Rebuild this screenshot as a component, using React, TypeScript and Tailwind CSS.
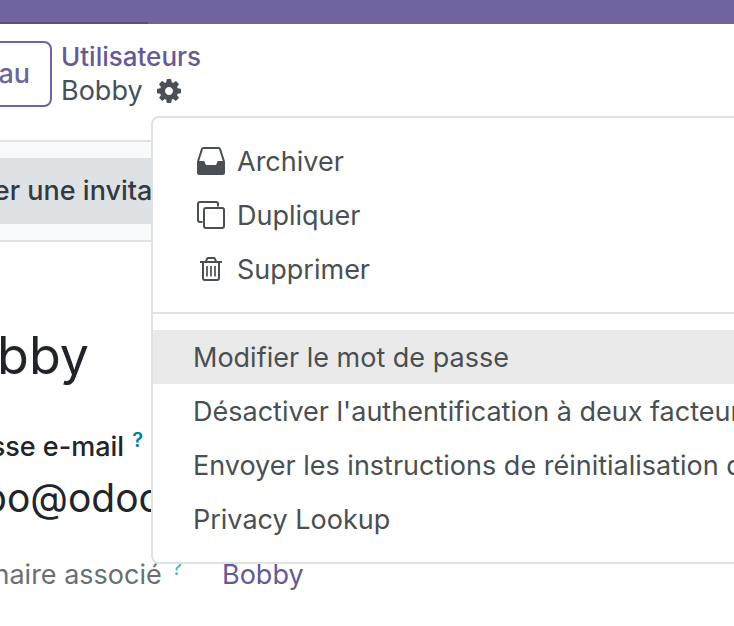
import type { ReactNode } from 'react';

interface MenuItemProps {
  active?: boolean;
  icon?: ReactNode;
  label: string;
}

function GearIcon() {
  return (
    <svg className="size-6" viewBox="0 128 1536 1536" fill="currentColor" aria-hidden="true">
      <path d="M1024 896q0-106-75-181t-181-75-181 75-75 181 75 181 181 75 181-75 75-181zm512-109v222q0 12-8 23t-20 13l-185 28q-19 54-39 91 35 50 107 138 10 12 10 25t-9 23q-27 37-99 108t-94 71q-12 0-26-9l-138-108q-44 23-91 38-16 136-29 186-7 28-36 28h-222q-14 0-24.500-8.500t-11.500-21.500l-28-184q-49-16-90-37l-141 107q-10 9-25 9-14 0-25-11-126-114-165-168-7-10-7-23 0-12 8-23 15-21 51-66.500t54-70.500q-27-50-41-99l-183-27q-13-2-21-12.500t-8-23.500v-222q0-12 8-23t19-13l186-28q14-46 39-92-40-57-107-138-10-12-10-24 0-10 9-23 26-36 98.500-107.500t94.500-71.500q13 0 26 10l138 107q44-23 91-38 16-136 29-186 7-28 36-28h222q14 0 24.500 8.500t11.500 21.500l28 184q49 16 90 37l142-107q9-9 24-9 13 0 25 10 129 119 165 170 7 8 7 22 0 12-8 23-15 21-51 66.500t-54 70.500q26 50 41 98l183 28q13 2 21 12.500t8 23.500z" />
    </svg>
  );
}

function ArchiveIcon() {
  return (
    <svg className="size-[30px]" viewBox="0 0 30 30" fill="none" aria-hidden="true">
      <path d="M2 15.500 5.900 3.200Q6.300 1.900 7.600 1.900H22.400Q23.700 1.900 24.100 3.200L28 15.500" stroke="currentColor" strokeWidth="2" />
      <path
        d="M1 15.800Q1 15 1.800 15H7.500Q8.500 15 8.800 16L9.400 18Q9.700 19 10.700 19H19.300Q20.300 19 20.600 18L21.200 16Q21.500 15 22.500 15H28.200Q29 15 29 15.800V26.500Q29 29 26.500 29H3.500Q1 29 1 26.500Z"
        fill="currentColor"
      />
    </svg>
  );
}

function DuplicateIcon() {
  return (
    <svg className="size-[30px]" viewBox="0 0 30 30" fill="none" stroke="currentColor" strokeWidth="2" aria-hidden="true">
      <path d="M6.500 22H4Q2 22 2 20V4Q2 2 4 2H20Q22 2 22 4V6.500" />
      <rect x="8" y="8" width="20" height="20" rx="2" />
    </svg>
  );
}

function TrashIcon() {
  return (
    <svg className="size-[30px]" viewBox="0 0 30 30" fill="none" stroke="currentColor" strokeWidth="2" aria-hidden="true">
      <path d="M4 8H26M7 8V24Q7 26 9 26H21Q23 26 23 24V8" />
      <path d="M10 7.500 11 4.900Q11.400 4 12.500 4H17.500Q18.600 4 19 4.900L20 7.500" />
      <path d="M11 12V22.500M15 12V22.500M19 12V22.500" strokeWidth="1.700" />
    </svg>
  );
}

function MenuItem({ active, icon, label }: MenuItemProps) {
  return (
    <li>
      <button
        type="button"
        role="menuitem"
        className={`flex h-[54px] w-full items-center gap-2 pl-10 text-left whitespace-nowrap ${active ? 'bg-[#eaeaea]' : ''}`}
      >
        {icon && <span className="flex w-9 shrink-0 justify-center">{icon}</span>}
        <span className="pt-[2px]">{label}</span>
      </button>
    </li>
  );
}

function ActionMenu() {
  return (
    <div
      role="menu"
      className="absolute top-[116px] right-[-240px] left-[151px] rounded-lg border-2 border-[#dfe2e4] bg-white py-4 text-[#4a4f53]"
    >
      <ul>
        <MenuItem icon={<ArchiveIcon />} label="Archiver" />
        <MenuItem icon={<DuplicateIcon />} label="Dupliquer" />
        <MenuItem icon={<TrashIcon />} label="Supprimer" />
      </ul>
      <hr className="my-4 border-t-2 border-[#dfe2e4]" />
      <ul>
        <MenuItem active label="Modifier le mot de passe" />
        <MenuItem label="Désactiver l'authentification à deux facteurs" />
        <MenuItem label="Envoyer les instructions de réinitialisation du mot de passe" />
        <MenuItem label="Privacy Lookup" />
      </ul>
    </div>
  );
}

export default function App() {
  return (
    <div className="relative min-h-screen overflow-hidden bg-white font-['Inter',sans-serif] text-[27px] leading-[42px] text-[#212529]">
      <nav className="flex h-6 items-end bg-[#71639e]">
        <div className="h-[2px] w-[148px] bg-[#5a4f7f]" />
      </nav>

      <header className="flex items-center gap-[9px] border-b-2 border-[#dfe2e4] pt-4 pb-8">
        <div className="flex w-[52px] justify-end">
          <button
            type="button"
            className="h-[66px] shrink-0 rounded-lg border-2 border-[#71639e] px-5 font-medium text-[#71639e]"
          >
            Nouveau
          </button>
        </div>
        <div className="leading-[34px]">
          <a href="#utilisateurs" className="block text-[26px] font-medium text-[#665a95]">
            Utilisateurs
          </a>
          <div className="flex items-center gap-[14px] text-[#495057]">
            <span>Bobby</span>
            <button type="button" aria-label="Actions">
              <GearIcon />
            </button>
          </div>
        </div>
      </header>

      <div className="flex border-b-2 border-[#dfe2e4] bg-[#f8f9fa] py-4">
        <div className="flex w-[225px] justify-end">
          <button type="button" className="h-[66px] shrink-0 bg-[#dee2e4] px-6 font-medium whitespace-nowrap text-[#343a40]">
            Envoyer une invitation
          </button>
        </div>
      </div>

      <main className="pt-[82px]">
        <div className="flex w-[89px] justify-end">
          <h1 className="text-[52px] leading-[64px]">Bobby</h1>
        </div>
        <div className="mt-[38px] flex w-[143px] justify-end gap-2 font-medium whitespace-nowrap">
          <span>Adresse e-mail</span>
          <sup className="top-0 text-[20px] leading-[28px] font-semibold text-[#017e9e]">?</sup>
        </div>
        <div className="mt-1 flex w-[162px] justify-end text-[39px] leading-[52px]">
          <span>bobo@odoo</span>
        </div>
        <div className="mt-[30px] flex gap-10">
          <div className="flex w-[182px] justify-end gap-[10px] whitespace-nowrap text-[#6c6f72]">
            <span>Partenaire associé</span>
            <sup className="top-0 text-[20px] leading-[28px] text-[#4fb3bf]">?</sup>
          </div>
          <a href="#bobby" className="text-[#665a95]">
            Bobby
          </a>
        </div>
      </main>

      <ActionMenu />
    </div>
  );
}
